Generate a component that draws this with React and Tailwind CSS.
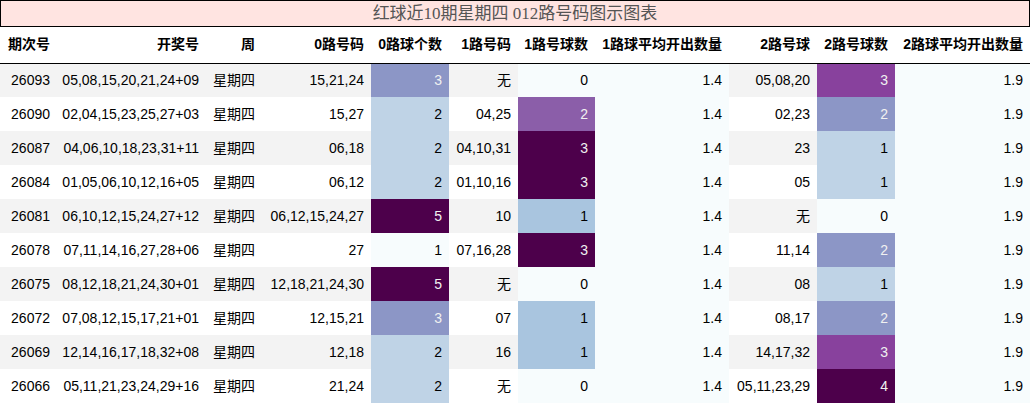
const rows = [
  ['26093', '05,08,15,20,21,24+09', '15,21,24', 3, '无', 0, '05,08,20', 3],
  ['26090', '02,04,15,23,25,27+03', '15,27', 2, '04,25', 2, '02,23', 2],
  ['26087', '04,06,10,18,23,31+11', '06,18', 2, '04,10,31', 3, '23', 1],
  ['26084', '01,05,06,10,12,16+05', '06,12', 2, '01,10,16', 3, '05', 1],
  ['26081', '06,10,12,15,24,27+12', '06,12,15,24,27', 5, '10', 1, '无', 0],
  ['26078', '07,11,14,16,27,28+06', '27', 1, '07,16,28', 3, '11,14', 2],
  ['26075', '08,12,18,21,24,30+01', '12,18,21,24,30', 5, '无', 0, '08', 1],
  ['26072', '07,08,12,15,17,21+01', '12,15,21', 3, '07', 1, '08,17', 2],
  ['26069', '12,14,16,17,18,32+08', '12,18', 2, '16', 1, '14,17,32', 3],
  ['26066', '05,11,21,23,24,29+16', '21,24', 2, '无', 0, '05,11,23,29', 4],
];

// BuPu gradient, one scale per column
const zero = { 1: 'bg-[#f7fcfd] text-black', 2: 'bg-[#bfd3e6] text-black', 3: 'bg-[#8c96c6] text-[#f1f1f1]', 5: 'bg-[#4d004b] text-[#f1f1f1]' };
const one = { 0: 'bg-[#f7fcfd] text-black', 1: 'bg-[#a9c5df] text-black', 2: 'bg-[#8b5ea9] text-[#f1f1f1]', 3: 'bg-[#4d004b] text-[#f1f1f1]' };
const two = { 0: 'bg-[#f7fcfd] text-black', 1: 'bg-[#bfd3e6] text-black', 2: 'bg-[#8c96c6] text-[#f1f1f1]', 3: 'bg-[#88419d] text-[#f1f1f1]', 4: 'bg-[#4d004b] text-[#f1f1f1]' };

const headers = ['期次号', '开奖号', '周', '0路号码', '0路球个数', '1路号码', '1路号球数', '1路球平均开出数量', '2路号球', '2路号球数', '2路球平均开出数量'];
const widths = [57, 149, 56, 109, 78, 69, 77, 134, 88, 78, 135];

function App() {
  return (
    <div className="w-[1030px] bg-white font-['Liberation_Sans','Noto_Sans_CJK_SC',sans-serif] text-[14px] text-black">
      <div className="h-[27px] border border-black bg-[#ffe4e1] flex items-center justify-center font-['Liberation_Serif','Noto_Sans_CJK_SC',serif] text-[17px] text-[#555]">
        红球近10期星期四 012路号码图示图表
      </div>
      <table className="table-fixed border-collapse w-[1030px]">
        <colgroup>
          {widths.map((w, i) => (
            <col key={i} style={{ width: w }} />
          ))}
        </colgroup>
        <thead>
          <tr className="h-[36px] border-b border-black">
            {headers.map((h) => (
              <th key={h} className="text-right font-bold pr-[7px] whitespace-nowrap">
                {h}
              </th>
            ))}
          </tr>
        </thead>
        <tbody>
          {rows.map((r, i) => {
            const stripe = i % 2 === 0 ? 'bg-[#f3f3f3]' : 'bg-white';
            const cell = 'text-right pr-[7px] whitespace-nowrap';
            return (
              <tr key={r[0]} className={`h-[34px] ${stripe}`}>
                <td className={cell}>{r[0]}</td>
                <td className={cell}>{r[1]}</td>
                <td className={cell}>星期四</td>
                <td className={cell}>{r[2]}</td>
                <td className={`${cell} ${zero[r[3]]}`}>{r[3]}</td>
                <td className={cell}>{r[4]}</td>
                <td className={`${cell} ${one[r[5]]}`}>{r[5]}</td>
                <td className={`${cell} bg-[#f7fcfd]`}>1.4</td>
                <td className={cell}>{r[6]}</td>
                <td className={`${cell} ${two[r[7]]}`}>{r[7]}</td>
                <td className={`${cell} bg-[#f7fcfd]`}>1.9</td>
              </tr>
            );
          })}
        </tbody>
      </table>
    </div>
  );
}

export default App;
